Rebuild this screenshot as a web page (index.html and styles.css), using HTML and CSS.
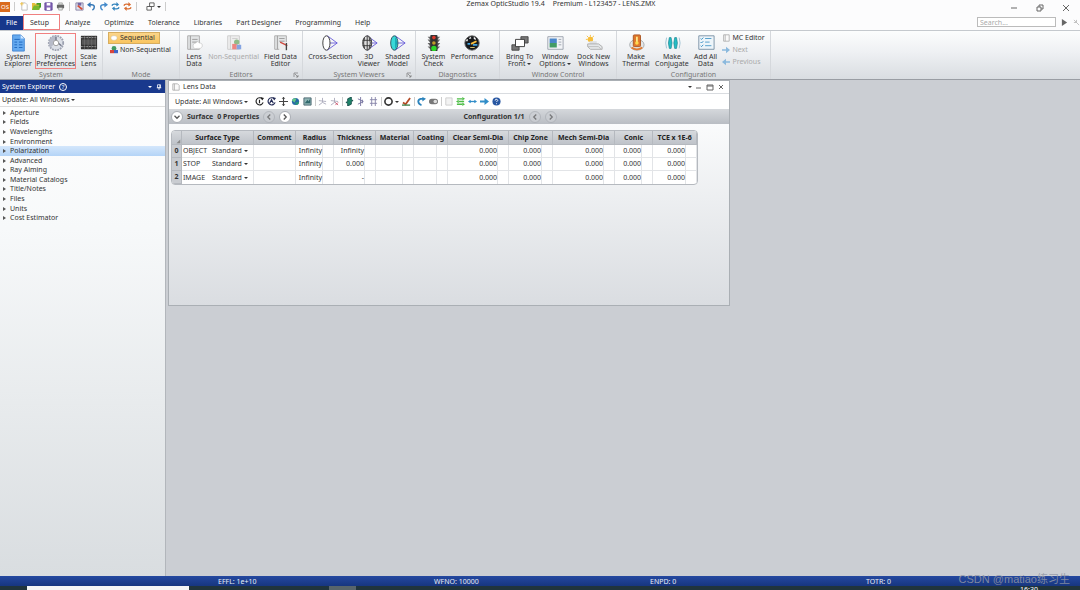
FILE: index.html
```html
<!DOCTYPE html>
<html lang="en">
  <head>
    <meta charset="UTF-8" />
    <meta name="viewport" content="width=device-width, initial-scale=1.0" />
    <title>Zemax OpticStudio 19.4</title>
    <link rel="stylesheet" href="styles.css">
  </head>
  <body>
    <header class="titlebar">
      <div class="quick-access">
        <button class="icon-btn logo" aria-label="OpticStudio">OS</button>
        <span class="divider"></span>
        <button class="icon-btn" aria-label="New"><svg viewBox="0 0 10 10"><path d="M2 1h4l2 2v6H2z" fill="#fff" stroke="#bbb"/><path d="M0 2h4M2 0v4" stroke="#f3c54a"/></svg></button>
        <button class="icon-btn" aria-label="Open"><svg viewBox="0 0 10 10"><path d="M0 1h3l1 1h4v7H0z" fill="#e5bd3c"/><path d="M2 4h8L8 9H0z" fill="#78b82e"/><path d="M5 2h4v4" fill="none" stroke="#449b24" stroke-width="2"/></svg></button>
        <button class="icon-btn" aria-label="Save"><svg viewBox="0 0 10 10"><path d="M1 1h8v8H1z" fill="#8566b7" stroke="#60449a"/><path d="M3 1h4v3H3zM3 6h4v3H3z" fill="#fff"/></svg></button>
        <button class="icon-btn" aria-label="Print"><svg viewBox="0 0 10 10"><path d="M1 3h8v4H1z" fill="#666"/><path d="M3 1h4v2H3zM3 6h4v3H3z" fill="#e5e8e5" stroke="#777" stroke-width=".6"/></svg></button>
        <span class="divider"></span>
        <button class="icon-btn" aria-label="Save session"><svg viewBox="0 0 10 10"><path d="M1 1h8v8H1z" fill="#dfe2ef" stroke="#8883a4"/><path d="M3 1h4v3H3z" fill="#7367a6"/><path d="M3 4l5 4" stroke="#d64f37" stroke-width="2"/></svg></button>
        <button class="icon-btn" aria-label="Undo"><svg viewBox="0 0 10 10"><path d="M2 3h3c4 0 4 4 1 6" fill="none" stroke="#3477b7" stroke-width="1.6"/><path d="M0 3l4-3v6z" fill="#3477b7"/></svg></button>
        <button class="icon-btn" aria-label="Redo"><svg viewBox="0 0 10 10"><path d="M8 3H5c-4 0-4 4-1 6" fill="none" stroke="#438acb" stroke-width="1.6"/><path d="M10 3L6 0v6z" fill="#438acb"/></svg></button>
        <button class="icon-btn" aria-label="Refresh"><svg viewBox="0 0 10 10"><path d="M1 4c1-2 4-2 6-1M9 6c-1 2-4 2-6 1" fill="none" stroke="#3484bd" stroke-width="1.6"/><path d="M6 0l3 3-3 2zM4 10L1 7l3-2z" fill="#3484bd"/></svg></button>
        <button class="icon-btn" aria-label="Refresh all"><svg viewBox="0 0 10 10"><path d="M1 4c1-2 4-2 6-1M9 6c-1 2-4 2-6 1" fill="none" stroke="#d96d31" stroke-width="1.6"/><path d="M6 0l3 3-3 2zM4 10L1 7l3-2z" fill="#d96d31"/></svg></button>
        <span class="divider wide"></span>
        <button class="icon-btn with-caret" aria-label="Windows"><svg viewBox="0 0 10 10"><path d="M4 1h5v4H4zM1 5h5v4H1z" fill="#fff" stroke="#555"/></svg><i class="caret"></i></button>
        <span class="divider"></span>
      </div>
      <div class="title"><span>Zemax OpticStudio 19.4</span><span>Premium - L123457 - LENS.ZMX</span></div>
      <div class="window-buttons">
        <button aria-label="Minimize"><svg viewBox="0 0 8 8"><path d="M1 4h6"/></svg></button>
        <button aria-label="Restore"><svg viewBox="0 0 8 8"><path d="M1 3h4v4H1zM3 3V1h4v4H5"/></svg></button>
        <button aria-label="Close"><svg viewBox="0 0 8 8"><path d="M1 1l6 6M7 1L1 7"/></svg></button>
      </div>
    </header>

    <nav class="tabs">
      <button class="tab file">File</button>
      <button class="tab active">Setup</button>
      <button class="tab">Analyze</button>
      <button class="tab">Optimize</button>
      <button class="tab">Tolerance</button>
      <button class="tab">Libraries</button>
      <button class="tab">Part Designer</button>
      <button class="tab">Programming</button>
      <button class="tab">Help</button>
      <form class="search">
        <input type="text" placeholder="Search..." aria-label="Search" />
        <button type="button" aria-label="Go"><svg viewBox="0 0 8 8"><path d="M1 0l6 4-6 4z" fill="#666"/></svg></button>
        <button type="button" aria-label="Options"><svg viewBox="0 0 8 8"><path d="M1 1l6 6M4 1v3H1" fill="none" stroke="#bbb"/></svg></button>
      </form>
    </nav>

    <section class="ribbon">
      <div class="group system">
        <div class="tools">
          <button class="tool">
            <svg viewBox="0 0 20 20"><path d="M4 1h9l4 4v14H4z" fill="#65aaf0" stroke="#3f83d0"/><path d="M13 1v4h4" fill="#d5eaff"/><path d="M6 6h6M6 9h3M11 9h4M6 12h3M11 12h4M6 15h3M11 15h4" stroke="#1c65bc"/></svg>
            <span>System<br>Explorer</span>
          </button>
          <button class="tool marked">
            <svg viewBox="0 0 20 20"><circle cx="10" cy="10" r="8" fill="#dce0e7" stroke="#9ca1b0" stroke-width="2" stroke-dasharray="2 1"/><path d="M10 2a8 8 0 0 0-6 13l4-4 2-3z" fill="#b7bbc8"/><path d="M10 3v5l6 5" fill="none" stroke="#74798c" stroke-width="1.6"/><circle cx="10" cy="10" r="3" fill="#fff" stroke="#999"/></svg>
            <span>Project<br>Preferences</span>
          </button>
          <button class="tool">
            <svg viewBox="0 0 20 20"><path d="M1 2h18v15H1z" fill="#333"/><path d="M1 4h18M1 14h18" stroke="#aaa" stroke-dasharray="2 1"/><path d="M2 6h16v6H2z" fill="#555"/><path d="M5 2v15M9 2v15M13 2v15M17 2v15" stroke="#777" stroke-width=".6"/></svg>
            <span>Scale<br>Lens</span>
          </button>
        </div>
        <div class="group-name">System</div>
      </div>

      <div class="group mode">
        <div class="stack">
          <button class="small selected"><svg viewBox="0 0 10 10"><ellipse cx="5" cy="5" rx="4" ry="3" fill="#fff" stroke="#bda773" stroke-width=".5"/></svg>Sequential</button>
          <button class="small"><svg viewBox="0 0 10 10"><circle cx="5" cy="3" r="3" fill="#429a62"/><path d="M0 5h5v4H0z" fill="#d9453c"/><path d="M5 5h5v4H5z" fill="#3f65c8"/></svg>Non-Sequential</button>
        </div>
        <div class="group-name">Mode</div>
      </div>

      <div class="group editors">
        <div class="tools">
          <button class="tool">
            <svg viewBox="0 0 20 20"><path d="M3 2h13v15H3z" fill="#e3e5e6" stroke="#aaa"/><path d="M6 2v15M8 6h6M8 9h6" stroke="#999"/><path d="M9 13q0-3 3-3 2-3 4 0 4 0 3 4-1 3-5 2-5 1-5-3" fill="#fff" stroke="#bbb" stroke-width=".6"/></svg>
            <span>Lens<br>Data</span>
          </button>
          <button class="tool" disabled>
            <svg viewBox="0 0 20 20"><path d="M3 2h13v15H3z" fill="#eee" stroke="#ccc"/><path d="M6 2v15M8 5h6" stroke="#ccc"/><circle cx="13" cy="9" r="3" fill="#90bb88"/><path d="M8 11h5v6H8z" fill="#ed8580"/><path d="M13 12h5v5h-5z" fill="#84a4e2"/></svg>
            <span>Non-Sequential</span>
          </button>
          <button class="tool">
            <svg viewBox="0 0 20 20"><path d="M3 2h13v15H3z" fill="#e3e5e6" stroke="#aaa"/><path d="M6 2v15M8 5h6M8 8h6" stroke="#999"/><path d="M8 9h9v9H8z" fill="#eee"/><path d="M9 9l8 4" stroke="#cf4b40" stroke-width="1.5"/><path d="M16 10v8" stroke="#444" stroke-width="1.5"/></svg>
            <span>Field Data<br>Editor</span>
          </button>
        </div>
        <div class="group-name">Editors<svg class="launcher" viewBox="0 0 6 6"><path d="M1 5V1h4M2 2l3 3M5 3v2H3" fill="none" stroke="#777" stroke-width=".7"/></svg></div>
      </div>

      <div class="group viewers">
        <div class="tools">
          <button class="tool">
            <svg viewBox="0 0 20 20"><path d="M7 2l11 8-11 8M7 10h11" fill="none" stroke="#665bd8"/><ellipse cx="6" cy="10" rx="4" ry="8" fill="#fff" stroke="#333"/></svg>
            <span>Cross-Section</span>
          </button>
          <button class="tool">
            <svg viewBox="0 0 20 20"><path d="M8 2l11 8-11 8M8 10h11" fill="none" stroke="#665bd8"/><ellipse cx="8" cy="10" rx="5" ry="8" fill="#ddd" stroke="#333"/><path d="M8 2v16M3 7h10M3 13h10M5 4q-2 6 0 12M10 3q3 7 0 14" fill="none" stroke="#333"/></svg>
            <span>3D<br>Viewer</span>
          </button>
          <button class="tool">
            <svg viewBox="0 0 20 20"><path d="M8 2l11 8-11 8M8 10h11" fill="none" stroke="#665bd8"/><ellipse cx="7" cy="10" rx="4" ry="8" fill="#39d8d8" stroke="#254f59"/><path d="M8 3q4 7 0 14" fill="#16a3b2"/></svg>
            <span>Shaded<br>Model</span>
          </button>
        </div>
        <div class="group-name">System Viewers<svg class="launcher" viewBox="0 0 6 6"><path d="M1 5V1h4M2 2l3 3M5 3v2H3" fill="none" stroke="#777" stroke-width=".7"/></svg></div>
      </div>

      <div class="group diagnostics">
        <div class="tools">
          <button class="tool">
            <svg viewBox="0 0 20 20"><path d="M4 3h14l-3 3h3l-3 4h3l-3 4h3l-3 3H7l-3-3h3l-3-4h3L4 6h3z" fill="#666"/><rect x="7" y="1" width="8" height="18" rx="1" fill="#333"/><circle cx="11" cy="4" r="2" fill="#dd382b"/><circle cx="11" cy="10" r="2" fill="#c09b2a"/><circle cx="11" cy="16" r="3" fill="#2ed72a"/></svg>
            <span>System<br>Check</span>
          </button>
          <button class="tool">
            <svg viewBox="0 0 20 20"><circle cx="10" cy="10" r="8" fill="#17191c" stroke="#666"/><path d="M4 8l1-2M7 5l2-1M12 4l2 2" stroke="#fff" stroke-width="1.5"/><path d="M9 11l6-3" stroke="#ffc13e" stroke-width="2"/><path d="M5 11h3M11 12h5" stroke="#45a5df" stroke-width="2"/><path d="M8 15h5" stroke="#e6cf76"/></svg>
            <span>Performance</span>
          </button>
        </div>
        <div class="group-name">Diagnostics</div>
      </div>

      <div class="group windows">
        <div class="tools">
          <button class="tool">
            <svg viewBox="0 0 20 20"><path d="M11 3h8v7h-8zM1 12h8v6H1z" fill="#777" stroke="#444"/><path d="M5 6h10v8H5z" fill="#fff" stroke="#333"/></svg>
            <span>Bring To<br>Front <i class="caret"></i></span>
          </button>
          <button class="tool">
            <svg viewBox="0 0 20 20"><path d="M2 3h17v14H2z" fill="#f2f4f7" stroke="#9aa2ac"/><path d="M4 5h8v5H4z" fill="#4a87ca"/><path d="M4 10h8v5H4z" fill="#439c65"/><path d="M14 6h3M14 9h3M14 12h3" stroke="#9aa2ac"/></svg>
            <span>Window<br>Options <i class="caret"></i></span>
          </button>
          <button class="tool">
            <svg viewBox="0 0 20 20"><circle cx="6" cy="6" r="3" fill="#f7bd38"/><path d="M6 1v2M1 6h2M2 2l2 2M10 2L8 4" stroke="#f7bd38"/><path d="M5 8h8v4H5z" fill="#dde0e3"/><path d="M3 11h12l4 3v3H6l-3-3z" fill="#e4e7e9" stroke="#aaa"/><path d="M3 14h12l3 3" fill="none" stroke="#bbb"/></svg>
            <span>Dock New<br>Windows</span>
          </button>
        </div>
        <div class="group-name">Window Control</div>
      </div>

      <div class="group configuration">
        <div class="tools">
          <button class="tool">
            <svg viewBox="0 0 20 20"><ellipse cx="11" cy="12" rx="8" ry="6" fill="#e4e7e8" stroke="#a5a9ac"/><path d="M5 15q6 4 12 0" fill="none" stroke="#e17a31" stroke-width="2"/><rect x="7" y="1" width="8" height="13" rx="1" fill="#e0782c" stroke="#a85320"/><path d="M11 3v6" stroke="#ffe98a" stroke-width="2"/><circle cx="11" cy="10" r="2" fill="#ffda4f"/></svg>
            <span>Make<br>Thermal</span>
          </button>
          <button class="tool">
            <svg viewBox="0 0 20 20"><path d="M4 4q-2 6 0 12M18 4q2 6 0 12" fill="none" stroke="#9cbfd1"/><path d="M7 4h2q2 6 0 12H7q-2-6 0-12M13 4h2q2 6 0 12h-2q-2-6 0-12" fill="#25bdc5" stroke="#16818c" stroke-width=".7"/></svg>
            <span>Make<br>Conjugate</span>
          </button>
          <button class="tool">
            <svg viewBox="0 0 20 20"><path d="M2 2h17v15H2z" fill="#edf5fa" stroke="#7790a4"/><path d="M4 5l1 1 2-2M4 9l1 1 2-2M4 13l1 1 2-2" fill="none" stroke="#2686bf"/><path d="M9 5h7M9 9h5M9 13h7" stroke="#4898c7"/></svg>
            <span>Add All<br>Data</span>
          </button>
          <div class="stack">
            <button class="small"><svg viewBox="0 0 10 10"><path d="M2 1h7v8H2zM4 1v8" fill="#fafafa" stroke="#aaa"/></svg>MC Editor</button>
            <button class="small" disabled><svg viewBox="0 0 10 10"><path d="M0 4h5V1l5 4-5 4V6H0z" fill="#8bb9dd"/></svg>Next</button>
            <button class="small" disabled><svg viewBox="0 0 10 10"><path d="M10 4H5V1L0 5l5 4V6h5z" fill="#8bb9dd"/></svg>Previous</button>
          </div>
        </div>
        <div class="group-name">Configuration</div>
      </div>
    </section>

    <main class="workspace">
      <aside class="explorer">
        <div class="explorer-head">
          <span>System Explorer</span>
          <button class="help" aria-label="Help">?</button>
          <button class="head-btn push" aria-label="Menu"><i class="caret"></i></button>
          <button class="head-btn" aria-label="Pin"><svg viewBox="0 0 8 8"><path d="M2 1h4v4H2zM1 5h6M4 5v3M5 1v4" fill="none" stroke="#fff"/></svg></button>
        </div>
        <button class="update">Update: All Windows <i class="caret"></i></button>
        <ul class="tree">
          <li><button>Aperture</button></li>
          <li><button>Fields</button></li>
          <li><button>Wavelengths</button></li>
          <li><button>Environment</button></li>
          <li class="selected"><button>Polarization</button></li>
          <li><button>Advanced</button></li>
          <li><button>Ray Aiming</button></li>
          <li><button>Material Catalogs</button></li>
          <li><button>Title/Notes</button></li>
          <li><button>Files</button></li>
          <li><button>Units</button></li>
          <li><button>Cost Estimator</button></li>
        </ul>
      </aside>

      <section class="editor">
        <div class="editor-title">
          <svg viewBox="0 0 10 10"><path d="M1 1h6l2 2v6H1zM3 1v8" fill="#fafafa" stroke="#aaa"/></svg>
          <span>Lens Data</span>
          <div class="editor-buttons">
            <button aria-label="Menu"><i class="caret"></i></button>
            <button aria-label="Minimize"><svg viewBox="0 0 8 8"><path d="M1 5h5"/></svg></button>
            <button aria-label="Maximize"><svg viewBox="0 0 8 8"><path d="M1 2h6v5H1zM1 3h6"/></svg></button>
            <button aria-label="Close"><svg viewBox="0 0 8 8"><path d="M2 2l4 4M6 2L2 6"/></svg></button>
          </div>
        </div>

        <div class="toolbar">
          <button class="update">Update: All Windows <i class="caret"></i></button>
          <button class="icon-btn" aria-label="Update"><svg viewBox="0 0 10 10"><path d="M8 2a4 4 0 1 0 1 4M5 3v4" fill="none" stroke="#222" stroke-width="1.3"/><path d="M6 0l4 1-2 3z" fill="#222"/></svg></button>
          <button class="icon-btn" aria-label="Update all"><svg viewBox="0 0 10 10"><path d="M8 2a4 4 0 1 0 1 4M3 7l2-4 2 4" fill="none" stroke="#222a55" stroke-width="1.3"/><path d="M6 0l4 1-2 3z" fill="#222a55"/></svg></button>
          <button class="icon-btn" aria-label="Move"><svg viewBox="0 0 10 10"><path d="M5 0v10M0 5h10" stroke="#444" stroke-width="1.2"/><path d="M3 2l2-2 2 2M3 8l2 2 2-2" fill="#444"/></svg></button>
          <button class="icon-btn" aria-label="Global"><svg viewBox="0 0 10 10"><circle cx="5" cy="5" r="4" fill="#2869a7"/><path d="M1 4q2-4 5-2L4 6z" fill="#65c886"/><path d="M5 6l4-1q0 4-4 4z" fill="#27967c"/></svg></button>
          <button class="icon-btn" aria-label="Image"><svg viewBox="0 0 10 10"><path d="M1 1h8v8H1z" fill="#8fb5b5" stroke="#49656f"/><path d="M2 7l3-4 1 2 2-3v5z" fill="#32696d"/></svg></button>
          <span class="divider"></span>
          <button class="icon-btn" aria-label="Tilt"><svg viewBox="0 0 10 10"><path d="M5 1v5L1 9M5 6l4 2M1 4l8 1" fill="none" stroke="#aab"/></svg></button>
          <button class="icon-btn" aria-label="Remove tilt"><svg viewBox="0 0 10 10"><path d="M5 1v5L1 9M5 6l2 1M1 4l8 1" fill="none" stroke="#aab"/><path d="M6 6l3 3M9 6L6 9" stroke="#d35a72"/></svg></button>
          <span class="divider"></span>
          <button class="icon-btn" aria-label="Fold"><svg viewBox="0 0 10 10"><path d="M3 2l4-2v3l2 1-2 1v3l-4 2V7L1 6l2-1z" fill="#20866b" stroke="#164e49"/></svg></button>
          <button class="icon-btn" aria-label="Align"><svg viewBox="0 0 10 10"><path d="M4 0v10M1 2l6 3-6 3M6 3v4" fill="none" stroke="#7774a0"/></svg></button>
          <button class="icon-btn" aria-label="Grid"><svg viewBox="0 0 10 10"><path d="M3 0v10M7 0v10M1 3h8M1 7h8" stroke="#8582a8"/></svg></button>
          <span class="divider"></span>
          <button class="icon-btn with-caret" aria-label="Aperture"><svg viewBox="0 0 10 10"><circle cx="5" cy="5" r="4" fill="#fff" stroke="#333" stroke-width="1.8"/></svg><i class="caret"></i></button>
          <button class="icon-btn" aria-label="Coating"><svg viewBox="0 0 10 10"><path d="M1 6l3 2 5-7" fill="none" stroke="#b44b27" stroke-width="2"/><path d="M0 9h9" stroke="#40824c" stroke-width="1.5"/></svg></button>
          <span class="divider"></span>
          <button class="icon-btn" aria-label="Reverse"><svg viewBox="0 0 10 10"><path d="M7 2H4c-4 1-3 6 1 7" fill="none" stroke="#2b83bc" stroke-width="2"/><path d="M6 0l4 2-4 3z" fill="#2b83bc"/></svg></button>
          <button class="icon-btn" aria-label="Toggle"><svg viewBox="0 0 10 10"><rect x="0" y="2" width="10" height="6" rx="3" fill="#777"/><circle cx="7" cy="5" r="2" fill="#ddd"/></svg></button>
          <span class="divider"></span>
          <button class="icon-btn" aria-label="Blank"><svg viewBox="0 0 10 10"><path d="M2 1h7v8H2z" fill="#f3f3f3" stroke="#ccc"/></svg></button>
          <button class="icon-btn" aria-label="Swap"><svg viewBox="0 0 10 10"><path d="M1 2h6M3 5h6M1 8h6" stroke="#4ebd47" stroke-width="1.5"/><path d="M7 0l3 2-3 2zM3 3L0 5l3 2zM7 6l3 2-3 2z" fill="#4ebd47"/></svg></button>
          <button class="icon-btn" aria-label="Fit"><svg viewBox="0 0 10 10"><path d="M1 5h8" stroke="#318dc8" stroke-width="1.4"/><path d="M0 5l3-2v4zM10 5L7 3v4z" fill="#318dc8"/></svg></button>
          <button class="icon-btn" aria-label="Next"><svg viewBox="0 0 10 10"><path d="M0 4h5V1l5 4-5 4V6H0z" fill="#318dc8"/></svg></button>
          <button class="icon-btn" aria-label="Help"><svg viewBox="0 0 10 10"><circle cx="5" cy="5" r="4.5" fill="#2857a2"/><path d="M3.5 4q0-2 2-1.5 2 1-.5 3M5 7v1" fill="none" stroke="#fff"/></svg></button>
        </div>

        <div class="surface-bar">
          <button class="round" aria-label="Expand"><svg viewBox="0 0 8 8"><path d="M2 3l2 2 2-2"/></svg></button>
          <b>Surface</b>
          <b>0 Properties</b>
          <button class="round" aria-label="Previous surface" disabled><svg viewBox="0 0 8 8"><path d="M5 2L3 4l2 2"/></svg></button>
          <button class="round" aria-label="Next surface"><svg viewBox="0 0 8 8"><path d="M3 2l2 2-2 2"/></svg></button>
          <div class="config">
            <b>Configuration 1/1</b>
            <button class="round" aria-label="Previous configuration" disabled><svg viewBox="0 0 8 8"><path d="M5 2L3 4l2 2"/></svg></button>
            <button class="round" aria-label="Next configuration" disabled><svg viewBox="0 0 8 8"><path d="M3 2l2 2-2 2"/></svg></button>
          </div>
        </div>

        <div class="sheet">
          <table class="lens-table">
            <colgroup>
              <col class="w10"><col class="w30"><col class="w42"><col class="w42">
              <col class="w27"><col class="w11">
              <col class="w31"><col class="w11">
              <col class="w27"><col class="w11">
              <col class="w23"><col class="w11">
              <col class="w50"><col class="w11">
              <col class="w33"><col class="w11">
              <col class="w51"><col class="w11">
              <col class="w27"><col class="w11">
              <col class="w33"><col class="w11">
            </colgroup>
            <thead>
              <tr>
                <th class="corner" aria-label="Select all"><svg viewBox="0 0 8 8"><path d="M7 2v5H2z" fill="#888"/></svg></th>
                <th colspan="2">Surface Type</th>
                <th>Comment</th>
                <th colspan="2">Radius</th>
                <th colspan="2">Thickness</th>
                <th colspan="2">Material</th>
                <th colspan="2">Coating</th>
                <th colspan="2">Clear Semi-Dia</th>
                <th colspan="2">Chip Zone</th>
                <th colspan="2">Mech Semi-Dia</th>
                <th colspan="2">Conic</th>
                <th colspan="2">TCE x 1E-6</th>
              </tr>
            </thead>
            <tbody>
              <tr><th>0</th><td class="name">OBJECT</td><td class="type"><button>Standard <i class="caret"></i></button></td><td></td><td>Infinity</td><td></td><td>Infinity</td><td></td><td></td><td></td><td></td><td></td><td>0.000</td><td></td><td>0.000</td><td></td><td>0.000</td><td></td><td>0.000</td><td></td><td>0.000</td><td></td></tr>
              <tr><th>1</th><td class="name">STOP</td><td class="type"><button>Standard <i class="caret"></i></button></td><td></td><td>Infinity</td><td></td><td>0.000</td><td></td><td></td><td></td><td></td><td></td><td>0.000</td><td></td><td>0.000</td><td></td><td>0.000</td><td></td><td>0.000</td><td></td><td>0.000</td><td></td></tr>
              <tr><th>2</th><td class="name">IMAGE</td><td class="type"><button>Standard <i class="caret"></i></button></td><td></td><td>Infinity</td><td></td><td>-</td><td></td><td></td><td></td><td></td><td></td><td>0.000</td><td></td><td>0.000</td><td></td><td>0.000</td><td></td><td>0.000</td><td></td><td>0.000</td><td></td></tr>
            </tbody>
          </table>
        </div>
      </section>
    </main>

    <footer class="statusbar">
      <span>EFFL: 1e+10</span>
      <span>WFNO: 10000</span>
      <span>ENPD: 0</span>
      <span>TOTR: 0</span>
    </footer>
    <div class="taskbar">
      <div class="task-search"></div>
      <div class="task-active"></div>
      <time class="clock">16:30</time>
    </div>
    <div class="watermark">CSDN @matiao练习生</div>
  </body>
</html>
```
FILE: styles.css
```css
* {
  box-sizing: border-box;
}
body {
  display: flex;
  flex-direction: column;
  height: 100vh;
  margin: 0;
  overflow: hidden;
  background: #fcfcfd;
  color: #333;
  font-family: "Noto Sans", "Open Sans", sans-serif;
  font-size: 7px;
  line-height: 8px;
}
button,
input {
  margin: 0;
  padding: 0;
  border: 0;
  background: none;
  color: inherit;
  font: inherit;
}
svg {
  display: block;
  flex: none;
}
.caret {
  display: inline-block;
  border: 2px solid transparent;
  border-top-color: currentColor;
  border-bottom: 0;
  vertical-align: middle;
}
.divider {
  width: 1px;
  height: 9px;
  background: #ccc;
}

/* Title bar */
.titlebar {
  display: flex;
  justify-content: space-between;
  height: 14px;
}
.quick-access {
  display: flex;
  flex: 1;
  align-items: center;
  gap: 3px;
  height: 13px;
}
.quick-access .divider {
  margin: 0 2px 0 1px;
}
.quick-access .divider.wide {
  margin-right: 6px;
}
.icon-btn {
  display: flex;
  align-items: center;
  gap: 2px;
}
.icon-btn svg {
  width: 9px;
  height: 9px;
}
.logo {
  width: 10px;
  height: 10px;
  justify-content: center;
  background: #d96a1d;
  color: #fff;
  font-size: 6px;
}
.title {
  display: flex;
  gap: 8px;
  padding-left: 52px;
}
.window-buttons {
  display: flex;
  flex: 1;
  align-items: flex-start;
  justify-content: flex-end;
  gap: 18px;
  padding: 4px 10px 0 0;
}
.window-buttons svg,
.editor-buttons svg {
  width: 8px;
  height: 8px;
  fill: none;
  stroke: #666;
}

/* Ribbon tabs */
.tabs {
  display: flex;
  height: 16px;
}
.tab {
  padding: 2px 7px 0;
}
.tab.file {
  width: 23px;
  margin-top: 2px;
  padding: 0;
  background: #17378b;
  color: #fff;
}
.tab.active {
  width: 37px;
  margin-right: -2px;
  padding: 1px 4px 0 0;
  border: 1px solid #f08080;
  background: #fff;
}
.search {
  display: flex;
  align-items: center;
  gap: 5px;
  margin-left: auto;
}
.search input {
  width: 79px;
  height: 10px;
  padding: 0 2px;
  border: 1px solid #bbb;
  background: #fff;
}
.search input::placeholder {
  color: #aaa;
}
.search svg {
  width: 7px;
  height: 7px;
}

/* Ribbon */
.ribbon {
  display: flex;
  height: 50px;
  border-top: 1px solid #c5c9ce;
  border-bottom: 1px solid #999da3;
  background: linear-gradient(#fcfdfd, #eef0f3 45%, #d9dde1);
}
.group {
  display: flex;
  flex-direction: column;
  justify-content: space-between;
  padding-top: 1px;
  border-right: 1px solid #d5d8dc;
}
.group.system { width: 103px; }
.group.mode { width: 77px; }
.group.editors { width: 123px; }
.group.viewers { width: 113px; }
.group.diagnostics { width: 84px; }
.group.windows { width: 117px; }
.group.configuration { width: 154px; }
.tools {
  display: flex;
  justify-content: space-evenly;
}
.tool {
  display: flex;
  flex-direction: column;
  align-items: center;
  gap: 1px;
  height: 34px;
  margin-top: 2px;
  line-height: 7px;
  white-space: nowrap;
}
.tool svg {
  width: 18px;
  height: 18px;
}
.tool.marked {
  outline: 1px solid #f08080;
}
.tool:disabled,
.small:disabled {
  color: #aaa;
}
.stack {
  display: flex;
  flex-direction: column;
  align-items: flex-start;
  gap: 1px;
}
.small {
  display: flex;
  align-items: center;
  gap: 2px;
  height: 11px;
}
.small svg {
  width: 8px;
  height: 8px;
}
.mode .stack {
  gap: 0;
  padding-left: 5px;
}
.mode .small {
  height: 12px;
  padding: 0 2px;
}
.mode .small.selected {
  padding: 0 4px 0 1px;
  border: 1px solid #d7ad5e;
  background: linear-gradient(#fbd58a, #f9c55f);
}
.group-name {
  position: relative;
  color: #777;
  line-height: 9px;
  text-align: center;
}
.launcher {
  position: absolute;
  right: 3px;
  bottom: 1px;
  width: 6px;
  height: 6px;
}

/* Work area */
.workspace {
  display: flex;
  flex: 1;
  align-items: flex-start;
  gap: 2px;
  min-height: 0;
  background: #cbced3;
}
.explorer {
  width: 166px;
  height: 100%;
  border-right: 1px solid #b2b6bb;
  background: linear-gradient(#fff, #f7f9fa 30%, #d9dde0);
}
.explorer-head {
  display: flex;
  align-items: center;
  gap: 4px;
  height: 13px;
  padding: 0 3px 0 2px;
  background: #19398d;
  color: #fff;
}
.help {
  width: 8px;
  height: 8px;
  border: 1px solid #fff;
  border-radius: 50%;
  font-size: 6px;
  line-height: 6px;
}
.head-btn svg {
  width: 6px;
  height: 6px;
}
.push {
  margin-left: auto;
}
.explorer .update {
  display: block;
  width: 100%;
  height: 14px;
  padding-left: 2px;
  border-bottom: 1px solid #ddd;
  text-align: left;
}
.tree {
  display: flex;
  flex-direction: column;
  height: 116px;
  margin: 0;
  padding: 1px 0 0;
  list-style: none;
}
.tree li {
  display: flex;
  flex: 1;
  min-height: 0;
}
.tree button {
  display: flex;
  align-items: center;
  gap: 4px;
  width: 100%;
  padding-left: 3px;
}
.tree button::before {
  content: "";
  border: 2px solid transparent;
  border-left: 3px solid #555;
  border-right: 0;
}
.tree .selected {
  background: linear-gradient(#d4e7fc, #b4d4f7);
}

/* Lens data window */
.editor {
  display: flex;
  flex-direction: column;
  width: 52%;
  min-height: 226px;
  border: 1px solid #aaafb4;
  background: #fff;
}
.editor-title {
  display: flex;
  align-items: center;
  gap: 3px;
  height: 13px;
  padding: 0 4px 0 3px;
  border-bottom: 1px solid #d9dce0;
}
.editor-title > svg {
  width: 8px;
  height: 8px;
}
.editor-buttons {
  display: flex;
  align-items: center;
  gap: 3px;
  margin-left: auto;
}
.toolbar {
  display: flex;
  align-items: center;
  gap: 3px;
  height: 15px;
  padding-left: 6px;
}
.toolbar .update {
  margin-right: 4px;
}
.toolbar .divider {
  margin-right: -1px;
}
.surface-bar {
  display: flex;
  align-items: center;
  gap: 4px;
  height: 15px;
  padding: 0 172px 0 2px;
  background: linear-gradient(#d5d8dc, #b9bdc3);
}
.round {
  width: 12px;
  height: 12px;
  border: 1px solid #aaaeb4;
  border-radius: 50%;
  background: #fff;
}
.round:disabled {
  background: #cccfd4;
  opacity: 0.7;
}
.round svg {
  width: 10px;
  height: 10px;
  fill: none;
  stroke: #555;
}
.config {
  display: flex;
  align-items: center;
  gap: 4px;
  margin-left: auto;
}
.sheet {
  flex: 1;
  padding: 6px 2px;
  background: linear-gradient(#fafbfc, #dadde1);
}
.lens-table {
  width: 526px;
  border: 1px solid #b5b9bf;
  border-radius: 4px;
  border-spacing: 0;
  overflow: hidden;
  background: #fff;
  table-layout: fixed;
}
.w10 { width: 10px; }
.w11 { width: 11px; }
.w23 { width: 23px; }
.w27 { width: 27px; }
.w30 { width: 30px; }
.w31 { width: 31px; }
.w33 { width: 33px; }
.w42 { width: 42px; }
.w50 { width: 50px; }
.w51 { width: 51px; }
.lens-table th,
.lens-table td {
  height: 13px;
  padding: 0;
  border-right: 1px solid #e2e4e7;
  border-bottom: 1px solid #e2e4e7;
  text-align: right;
  white-space: nowrap;
}
.lens-table th {
  border-color: #b5b9bf;
  background: #c9ccd1;
  text-align: center;
}
.lens-table thead th {
  height: 14px;
  background: linear-gradient(#d6d9dd, #bfc3c9);
  color: #222;
}
.lens-table tr:last-child td {
  border-bottom: 0;
}
.corner {
  vertical-align: bottom;
}
.corner svg {
  width: 6px;
  height: 6px;
  margin-left: auto;
}
.lens-table .name {
  padding-left: 1px;
  border-right: 0;
  text-align: left;
}
.lens-table .type {
  text-align: left;
}

/* Bottom bars */
.statusbar {
  display: grid;
  grid-template-columns: repeat(4, 1fr);
  height: 10px;
  padding-left: 20%;
  background: linear-gradient(#2448a0, #17367f);
  color: #e8edf7;
  line-height: 11px;
}
.statusbar span {
  padding-left: 2px;
}
.taskbar {
  display: flex;
  height: 4px;
  overflow: hidden;
  background: #20343c;
}
.task-search {
  width: 15%;
  margin: 0 13% 0 27px;
  background: #f4f5f5;
}
.task-active {
  width: 27px;
  background: #58656b;
}
.clock {
  margin-left: auto;
  padding-right: 42px;
  color: #fff;
}
.watermark {
  position: absolute;
  right: 10px;
  bottom: 4px;
  color: rgba(145, 150, 165, 0.85);
  font-family: "Liberation Sans", "Noto Sans CJK SC", sans-serif;
  font-size: 11px;
  line-height: 14px;
}
```
